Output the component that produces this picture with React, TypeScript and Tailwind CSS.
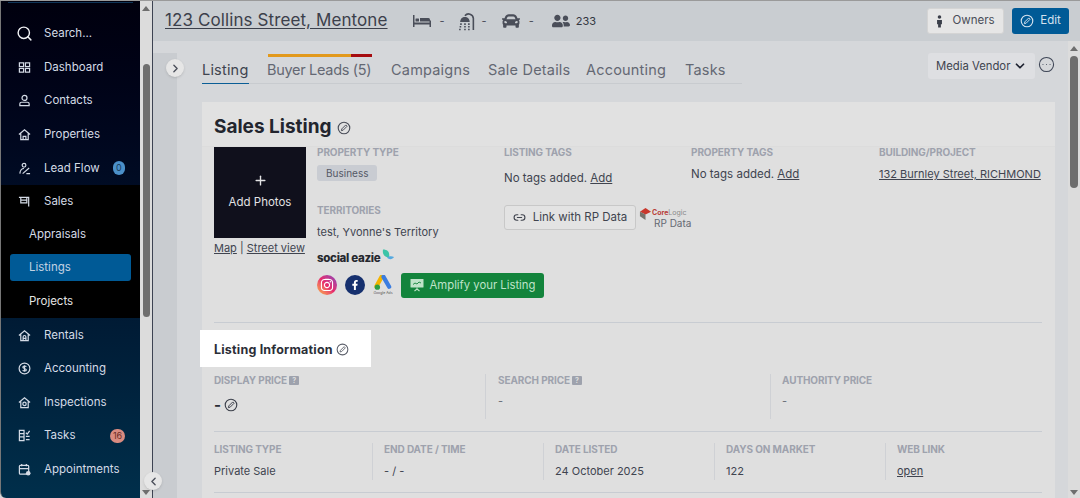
import { ChevronDown, ChevronLeft, ChevronRight, CircleEllipsis, Link2, Plus, Search } from "lucide-react";
import type { ReactNode } from "react";
import { FaCar, FaFacebookF, FaInstagram, FaUserFriends } from "react-icons/fa";

type IconProps = { className?: string };

function EditCircle({ className }: IconProps) {
  return (
    <svg viewBox="0 0 16 16" fill="none" stroke="currentColor" strokeWidth="1.3" className={className}>
      <circle cx="8" cy="8" r="6.6" />
      <path d="M5 11l.5-2L10 4.5l1.5 1.5L7 10.5z" strokeWidth="1.1" />
    </svg>
  );
}

function NavIcon({ children }: { children: ReactNode }) {
  return (
    <svg viewBox="0 0 14 14" fill="none" stroke="currentColor" strokeWidth="1.3" className="h-[13px] w-[13px] shrink-0">
      {children}
    </svg>
  );
}

const dashboardIcon = (
  <NavIcon>
    <rect x="1.5" y="2" width="4.5" height="4" />
    <rect x="8" y="2" width="4.5" height="4" />
    <rect x="1.5" y="8" width="4.5" height="4" />
    <rect x="8" y="8" width="4.5" height="4" />
  </NavIcon>
);
const contactsIcon = (
  <NavIcon>
    <circle cx="7" cy="4.2" r="2.7" />
    <path d="M2 12.5V10.5c0-1 .8-1.6 1.8-1.6h6.4c1 0 1.8.6 1.8 1.6v2z" />
  </NavIcon>
);
const homeIcon = (
  <NavIcon>
    <path d="M1 7l6-5 6 5M3 6v6.5h8V6" />
    <path d="M5.5 12.5V9h3v3.5" />
  </NavIcon>
);
const leadIcon = (
  <NavIcon>
    <circle cx="6.5" cy="3.5" r="2" />
    <path d="M2 12.5c.3-3.5 2-5.5 4.5-5.5M5 12.5l7-6M9 12.5h4" />
  </NavIcon>
);
const salesIcon = (
  <NavIcon>
    <path d="M1 2.5h10.5v10M3 2.5v6h6.5v-6M3 5.5h6.5" />
  </NavIcon>
);
const rentalsIcon = (
  <NavIcon>
    <path d="M1 7l6-5 6 5M3 6v6.5h8V6" />
    <path d="M5.5 12.5V8.5a1.5 1.5 0 0 1 3 0v4M5.5 10h3" />
  </NavIcon>
);
const accountingIcon = (
  <NavIcon>
    <circle cx="7" cy="7" r="5.8" />
    <path d="M9 5c-.5-.8-3.6-1.2-3.8.5C5 7.2 9.2 6.8 9 8.6c-.2 1.5-3.5 1.2-4 .2M7 3.5v7" />
  </NavIcon>
);
const inspectionsIcon = (
  <NavIcon>
    <path d="M1 7l6-5 6 5M3 6v6.5h8V6" />
    <circle cx="7" cy="8.5" r="1.8" />
  </NavIcon>
);
const tasksIcon = (
  <NavIcon>
    <path d="M1.5 1.5h5v11h-5zM1.5 5h5M1.5 8.5h5M8.5 4l1.5 1.5L12.5 2M8.5 8h4M8.5 11.5h4" />
  </NavIcon>
);
const appointmentsIcon = (
  <NavIcon>
    <rect x="1.5" y="2.5" width="10" height="9.5" rx="1" />
    <path d="M1.5 6h10M4 1v2.5M9 1v2.5" />
    <circle cx="11" cy="11" r="2.5" fill="currentColor" stroke="none" />
  </NavIcon>
);

function NavRow({ icon, label, badge }: { icon: ReactNode; label: string; badge?: ReactNode }) {
  return (
    <div className="flex h-[33.6px] items-center gap-[13px] pl-[17px] whitespace-nowrap text-[#d4dbe6]">
      {icon}
      <span>{label}</span>
      {badge}
    </div>
  );
}

function Field({ label, children, help }: { label: string; children: ReactNode; help?: boolean }) {
  return (
    <div>
      <div className="flex items-center gap-[2px] text-[10px] leading-[12px] font-bold tracking-[-0.1px] whitespace-nowrap text-[#9ea2ad] uppercase">
        {label}
        {help && <span className="flex h-[9px] w-[10px] items-center justify-center rounded-[1px] bg-[#9ea2ad] text-[7px] leading-none text-[#dfdfdf]">?</span>}
      </div>
      {children}
    </div>
  );
}

function GoogleAdsMark() {
  return (
    <div className="flex w-[20px] flex-col items-center">
      <svg viewBox="0 0 20 17" className="h-[16px] w-[19px]">
        <path d="M8 2L2.5 12" stroke="#f4b400" strokeWidth="4.5" strokeLinecap="round" />
        <path d="M10 2l6 10.5" stroke="#3b7de0" strokeWidth="4.5" strokeLinecap="round" />
        <circle cx="3.5" cy="13" r="2.8" fill="#2f9e44" />
      </svg>
      <span className="text-[3.5px] leading-[5px] whitespace-nowrap text-[#555]">Google Ads</span>
    </div>
  );
}

function BedIcon() {
  return (
    <svg viewBox="0 0 18 12" className="h-[12px] w-[18px] text-[#4a4e59]" fill="currentColor">
      <path d="M0 0h1.5v7.5h15V5.5H18V12h-1.5V9.500h-15V12H0z" />
      <rect x="2.5" y="3.5" width="3.5" height="3" rx="0.5" />
      <path d="M7 3h8.500a1.500 1.500 0 0 1 1.500 1.500v2H7z" />
    </svg>
  );
}

function ShowerIcon() {
  return (
    <svg viewBox="0 0 16 18" className="h-[19px] w-[17px] text-[#4a4e59]" fill="none" stroke="currentColor">
      <path d="M14.5 17V6a4.500 4.500 0 0 0-8-2.500" strokeWidth="1.5" />
      <path d="M2 9.500c0-3 2-4.800 4.500-4.800s4.500 1.800 4.500 4.800z" fill="currentColor" stroke="none" />
      <path d="M2 11.500h1.500M5.800 11.500h1.500M9.500 11.500H11M1.500 14h1.500M5.800 14h1.500M9.500 14H11M1 16.500h1.500M5.800 16.500h1.500M9.500 16.500H11" strokeWidth="1.500" />
    </svg>
  );
}

function AmplifyIcon() {
  return (
    <svg viewBox="0 0 14 14" className="h-[14px] w-[14px]" fill="none">
      <rect x="0.5" y="1" width="13" height="8.5" rx="0.5" fill="#bfe3c9" />
      <path d="M3 6.500l2-1.500 2 1 2-2 2 1" stroke="#13843c" strokeWidth="0.9" />
      <path d="M7 9.500v2M4.500 13l2.500-2 2.500 2" stroke="#bfe3c9" strokeWidth="1.100" />
    </svg>
  );
}

export default function App() {
  return (
    <div className="flex h-[498px] w-[1080px] overflow-hidden border-t border-[#9a9a9a] bg-[#d5d7da] font-['Inter',sans-serif] text-[11px] text-[#40444f]">
      <aside className="relative flex w-[140px] shrink-0 flex-col rounded-bl-[6px] border-l border-[#777] bg-gradient-to-b from-[#00000e] via-[#00132c] to-[#002f4b] text-[11.5px]">
        <div className="mx-[7px] mt-[1px] h-[1px] bg-[#0f3558]" />
        <div className="mt-[14px] flex h-[33.6px] items-center gap-[11px] pl-[15px] text-[#d4dbe6]">
          <Search size={17} strokeWidth={2} className="shrink-0 text-[#f1f3f6]" />
          <span>Search...</span>
        </div>
        <NavRow icon={dashboardIcon} label="Dashboard" />
        <NavRow icon={contactsIcon} label="Contacts" />
        <NavRow icon={homeIcon} label="Properties" />
        <NavRow
          icon={leadIcon}
          label="Lead Flow"
          badge={<span className="mr-[15px] ml-auto flex h-[14px] w-[14px] items-center justify-center rounded-full bg-[#4b90c9] text-[9px] text-[#173a5a]">0</span>}
        />
        <div className="bg-black">
          <NavRow icon={salesIcon} label="Sales" />
          <div className="flex h-[32.6px] items-center pl-[28px] text-[#d4dbe6]">Appraisals</div>
          <div className="mx-[9px] mt-[3.3px] mb-[3.3px] flex h-[27px] items-center rounded-[3px] bg-[#005a96] pl-[19px] text-[#c3d3e3]">Listings</div>
          <div className="flex h-[33.6px] items-center pl-[28px] text-[#e4e4e4]">Projects</div>
        </div>
        <NavRow icon={rentalsIcon} label="Rentals" />
        <NavRow icon={accountingIcon} label="Accounting" />
        <NavRow icon={inspectionsIcon} label="Inspections" />
        <NavRow
          icon={tasksIcon}
          label="Tasks"
          badge={<span className="mr-[15px] ml-auto flex h-[14px] w-[15px] items-center justify-center rounded-full bg-[#d98b80] text-[9px] text-[#6b2b25]">16</span>}
        />
        <NavRow icon={appointmentsIcon} label="Appointments" />
      </aside>

      <div className="flex w-[12px] shrink-0 flex-col items-center bg-[#dcdcdc]">
        <div className="mt-[5px] h-0 w-0 border-x-[4px] border-b-[5px] border-x-transparent border-b-[#6e6e6e]" />
        <div className="mt-[53px] h-[253px] w-[7px] rounded-full bg-[#6e6e6e]" />
        <div className="mt-auto mb-[3px] h-0 w-0 border-x-[4px] border-t-[5px] border-x-transparent border-t-[#6e6e6e]" />
      </div>

      <main className="flex min-w-0 flex-1 flex-col border-l border-[#3d4352]">
        <header className="flex h-[40px] shrink-0 items-center bg-[#c9cdd1] pr-[11px] pl-[12px]">
          <a className="text-[17px] tracking-[0.1px] text-[#3c404b] underline underline-offset-2">123 Collins Street, Mentone</a>
          <div className="ml-[25px] flex items-center text-[#4a4e59]">
            <BedIcon />
            <span className="ml-[9px]">-</span>
            <span className="ml-[13px]">
              <ShowerIcon />
            </span>
            <span className="ml-[7px]">-</span>
            <FaCar size={18} className="ml-[15px]" />
            <span className="ml-[9px]">-</span>
            <FaUserFriends size={18} className="ml-[18px]" />
            <span className="ml-[6px] text-[#33363f]">233</span>
          </div>
          <div className="ml-auto flex items-center gap-[8px]">
            <button className="flex h-[26px] w-[77px] items-center justify-center gap-[9px] rounded-[3px] border border-[#d4d4d4] bg-[#e6e6e6] text-[11.5px] text-[#4a4e59]">
              <svg viewBox="0 0 8 16" className="h-[13px] w-[7px]" fill="#3b3f4a">
                <circle cx="4" cy="2.5" r="2.2" />
                <path d="M1 6h6v5.500H5.700V15.500H2.300V11.500H1z" />
              </svg>
              Owners
            </button>
            <button className="flex h-[26px] w-[57px] items-center justify-center gap-[6px] rounded-[3px] bg-[#005a96] text-[11.5px] text-[#d5e2ee]">
              <EditCircle className="h-[14px] w-[14px]" />
              Edit
            </button>
          </div>
        </header>

        <div className="flex min-h-0 flex-1">
          <div className="mt-[12px] w-[24px] shrink-0 bg-[#c9ccd0]" />
          <div className="min-w-0 flex-1 overflow-hidden pr-[13px] pl-[25px]">
            <div className="flex h-[61px] items-start">
              <nav className="mt-[13px] flex h-[30px] w-[540px] items-start gap-[18px] border-b border-[#c8cbcf] pt-[6px] text-[14.5px] leading-[20px] tracking-[0.2px] text-[#646873]">
                <a className="h-[24px] w-[47px] border-b border-[#0b5e96] text-[#40444f]">Listing</a>
                <a className="relative w-[106px] tracking-[-0.3px] whitespace-nowrap">
                  <span className="absolute -top-[6px] left-[1px] flex h-[3px] w-[104px]">
                    <span className="w-[83px] bg-[#e2991c]" />
                    <span className="w-[21px] bg-[#a60c10]" />
                  </span>
                  Buyer Leads (5)
                </a>
                <a className="w-[79px]">Campaigns</a>
                <a className="w-[80px] whitespace-nowrap">Sale Details</a>
                <a className="w-[81px]">Accounting</a>
                <a>Tasks</a>
              </nav>
              <div className="mt-[12px] ml-auto flex items-center">
                <div className="flex h-[26px] w-[107px] items-center gap-[3px] rounded-[3px] bg-[#dedfe2] pl-[8px] text-[11.3px] whitespace-nowrap text-[#40444f]">
                  Media Vendor
                  <ChevronDown size={14} strokeWidth={3} className="shrink-0 text-[#1e2230]" />
                </div>
                <CircleEllipsis size={17} strokeWidth={1.5} className="-mt-[4px] ml-[3px] text-[#3f4657]" />
              </div>
            </div>

            <section className="h-[420px] bg-[#dfdfdf]">
              <div className="flex h-[45px] items-center gap-[5px] border-b border-[#dcdcdc] bg-[#e1e1e1] pt-[6px] pl-[12px]">
                <h1 className="text-[19px] font-bold text-[#22252e]">Sales Listing</h1>
                <EditCircle className="mt-[1px] h-[14px] w-[14px] text-[#4a4e59]" />
              </div>

              <div className="mx-[12px] mr-[13px] flex h-[176px] border-b border-[#c8ccd2]">
                <div className="w-[92px] shrink-0">
                  <div className="flex h-[91px] flex-col items-center justify-center bg-[#10101c] text-[11.5px] text-[#e2e2e4]">
                    <Plus size={15} strokeWidth={2.2} />
                    <span className="mt-[6px]">Add Photos</span>
                  </div>
                  <div className="mt-[3px] text-[11px] leading-[14px] whitespace-nowrap">
                    <a className="underline">Map</a> | <a className="underline">Street view</a>
                  </div>
                </div>

                <div className="-mt-[1px] ml-[11px] grid flex-1 grid-cols-[187px_187px_188px_1fr]">
                  <div>
                    <Field label="Property Type">
                      <span className="mt-[7px] inline-block h-[16px] rounded-[3px] bg-[#c9ccd2] px-[9px] text-[10px] leading-[16px] text-[#555966]">Business</span>
                    </Field>
                    <div className="mt-[22px]">
                      <Field label="Territories">
                        <p className="mt-[9px] leading-[14px]">test, Yvonne's Territory</p>
                      </Field>
                    </div>
                    <div className="mt-[7px] flex h-[19px] items-end">
                      <span className="text-[11.5px] leading-[13px] font-extrabold tracking-[-0.3px] text-[#26282e]">social eazie</span>
                      <svg viewBox="0 0 14 14" className="mb-[2px] h-[15px] w-[14px]">
                        <path d="M3 1c5 0 7 3 6 8C5 9 2 6 3 1z" fill="#3cc4a8" />
                        <path d="M7 9c2-1.5 5-1.5 7-.5-1.5 2.500-5 3-7 .5z" fill="#55a9e0" />
                      </svg>
                    </div>
                    <div className="mt-[8px] flex w-max items-center">
                      <span className="flex h-[20px] w-[20px] items-center justify-center rounded-full bg-gradient-to-tr from-[#f9b233] via-[#e6286e] to-[#8a3ab9] text-white">
                        <FaInstagram size={14} />
                      </span>
                      <span className="ml-[8px] flex h-[20px] w-[20px] items-center justify-center rounded-full bg-[#16306e] text-white">
                        <FaFacebookF size={10} />
                      </span>
                      <span className="ml-[8px]">
                        <GoogleAdsMark />
                      </span>
                      <button className="ml-[8px] flex h-[25px] w-[143px] items-center justify-center gap-[6px] rounded-[3px] bg-[#13843c] text-[11.3px] whitespace-nowrap text-[#bfe3c9]">
                        <AmplifyIcon />
                        Amplify your Listing
                      </button>
                    </div>
                  </div>

                  <div>
                    <Field label="Listing Tags">
                      <p className="mt-[13px] text-[11.5px] leading-[14px]">
                        No tags added. <a className="underline">Add</a>
                      </p>
                    </Field>
                    <div className="mt-[20px] flex w-max items-center">
                      <button className="flex h-[25px] w-[132px] items-center justify-center gap-[7px] rounded-[3px] border border-[#c8c8c8] bg-[#e3e3e3] text-[11.5px] text-[#40444f]">
                        <Link2 size={13} />
                        Link with RP Data
                      </button>
                      <div className="ml-[3px] flex flex-col">
                        <div className="flex items-center">
                          <svg viewBox="0 0 14 14" className="h-[13px] w-[13px]">
                            <path d="M1 5l6-4 6 4-6 3z" fill="#c9372c" />
                            <path d="M1 5l6 3v6L1 10z" fill="#77736c" />
                          </svg>
                          <span className="text-[7px] leading-[8px] font-bold text-[#b8403a]">
                            Core<span className="font-normal text-[#8a8a8a]">Logic</span>
                          </span>
                        </div>
                        <span className="-mt-[2px] pl-[15px] text-[10px] leading-[11px] whitespace-nowrap text-[#666a74]">RP Data</span>
                      </div>
                    </div>
                  </div>

                  <Field label="Property Tags">
                    <p className="mt-[9px] text-[11.5px] leading-[14px]">
                      No tags added. <a className="underline">Add</a>
                    </p>
                  </Field>

                  <Field label="Building/Project">
                    <a className="mt-[9px] block leading-[14px] whitespace-nowrap underline">132 Burnley Street, RICHMOND</a>
                  </Field>
                </div>
              </div>

              <div className="mt-[7px] ml-[-2px] flex h-[37px] w-[171px] items-center gap-[3px] bg-white pt-[3px] pl-[14px]">
                <h2 className="text-[12.5px] font-bold tracking-[0.2px] whitespace-nowrap text-[#2b2e37]">Listing Information</h2>
                <EditCircle className="-mt-[2px] h-[13px] w-[13px] shrink-0 text-[#5a5e69]" />
              </div>

              <div className="mt-[7px] mr-[13px] ml-[12px] grid h-[58px] grid-cols-[271px_285px_1fr] border-b border-[#c8ccd2] pb-[12px]">
                <Field label="Display Price" help>
                  <div className="mt-[11px] flex items-center gap-[3px]">
                    <span className="text-[15px] leading-[16px] font-bold text-[#2b2e37]">-</span>
                    <EditCircle className="h-[14px] w-[14px] text-[#3c404b]" />
                  </div>
                </Field>
                <div className="border-l border-[#cfd1d5] pl-[12px]">
                  <Field label="Search Price" help>
                    <p className="mt-[8px] leading-[14px] text-[#6a6e78]">-</p>
                  </Field>
                </div>
                <div className="border-l border-[#cfd1d5] pl-[11px]">
                  <Field label="Authority Price">
                    <p className="mt-[8px] leading-[14px] text-[#6a6e78]">-</p>
                  </Field>
                </div>
              </div>

              <div className="mr-[13px] ml-[12px] grid h-[61px] grid-cols-[158px_171px_171px_171px_1fr] border-b border-[#c8ccd2] pt-[11px] pb-[12px]">
                <Field label="Listing Type">
                  <p className="mt-[9px] leading-[14px]">Private Sale</p>
                </Field>
                <div className="border-l border-[#cfd1d5] pl-[11px]">
                  <Field label="End Date / Time">
                    <p className="mt-[9px] leading-[14px]">- / -</p>
                  </Field>
                </div>
                <div className="border-l border-[#cfd1d5] pl-[11px]">
                  <Field label="Date Listed">
                    <p className="mt-[9px] leading-[14px]">24 October 2025</p>
                  </Field>
                </div>
                <div className="border-l border-[#cfd1d5] pl-[11px]">
                  <Field label="Days on Market">
                    <p className="mt-[9px] leading-[14px]">122</p>
                  </Field>
                </div>
                <div className="border-l border-[#cfd1d5] pl-[11px]">
                  <Field label="Web Link">
                    <a className="mt-[9px] block leading-[14px] underline">open</a>
                  </Field>
                </div>
              </div>
            </section>
          </div>

          <div className="flex w-[12px] shrink-0 flex-col items-center bg-[#dcdcdc]">
            <div className="mt-[5px] h-0 w-0 border-x-[4px] border-b-[5px] border-x-transparent border-b-[#6e6e6e]" />
            <div className="mt-[5px] h-[132px] w-[8px] rounded-full bg-[#6e6e6e]" />
            <div className="mt-auto mb-[3px] h-0 w-0 border-x-[4px] border-t-[5px] border-x-transparent border-t-[#6e6e6e]" />
          </div>
        </div>
      </main>

      <span className="absolute top-[59px] left-[166px] flex h-[18px] w-[18px] items-center justify-center rounded-full bg-[#e6e6e6] text-[#4a4e59] shadow">
        <ChevronRight size={13} strokeWidth={2.5} />
      </span>
      <span className="absolute top-[472px] left-[144px] flex h-[18px] w-[18px] items-center justify-center rounded-full bg-[#e6e6e6] text-[#4a4e59] shadow">
        <ChevronLeft size={13} strokeWidth={2.5} />
      </span>
    </div>
  );
}
